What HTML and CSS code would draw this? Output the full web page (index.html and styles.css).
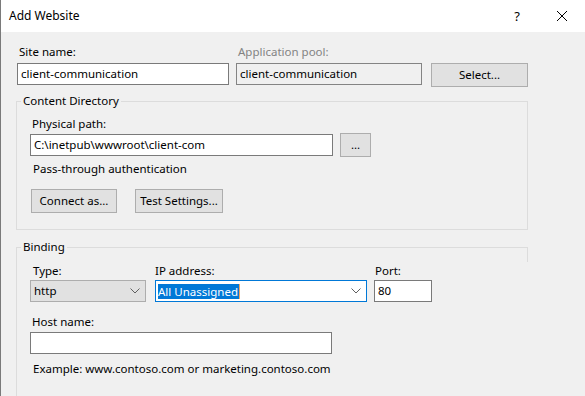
FILE: index.html
```html
<!DOCTYPE html>
<html lang="en">
<head>
    <meta charset="UTF-8">
    <meta name="viewport" content="width=device-width, initial-scale=1.0">
    <title>Add Website</title>
    <link rel="stylesheet" href="styles.css">
</head>
<body>
    <div class="window">
        <div class="titlebar">
            <span class="title">Add Website</span>
            <span class="help">?</span>
            <svg class="close" width="12" height="12" viewBox="0 0 12 12">
                <path d="M1 1 L11 11 M11 1 L1 11" stroke="#000" stroke-width="1" fill="none"/>
            </svg>
        </div>

        <div class="content">
            <div class="site-row">
                <div class="field site-name">
                    <label>Site name:</label>
                    <div class="textbox">client-communication</div>
                </div>
                <div class="field app-pool">
                    <label class="disabled">Application pool:</label>
                    <div class="textbox readonly">client-communication</div>
                </div>
                <button class="btn select-btn">Select...</button>
            </div>

            <fieldset class="group content-dir">
                <legend>Content Directory</legend>
                <label class="inner-label">Physical path:</label>
                <div class="path-row">
                    <div class="textbox path">C:\inetpub\wwwroot\client-com</div>
                    <button class="btn browse-btn">...</button>
                </div>
                <div class="auth">Pass-through authentication</div>
                <div class="btn-row">
                    <button class="btn connect-btn">Connect as...</button>
                    <button class="btn test-btn">Test Settings...</button>
                </div>
            </fieldset>

            <fieldset class="group binding">
                <legend>Binding</legend>
                <div class="binding-row">
                    <div class="field type">
                        <label class="inner-label">Type:</label>
                        <div class="combo">
                            <span>http</span>
                            <svg class="chevron" width="10" height="6" viewBox="0 0 10 6">
                                <path d="M0.5 0.5 L5 5 L9.5 0.5" stroke="#606060" stroke-width="1" fill="none"/>
                            </svg>
                        </div>
                    </div>
                    <div class="field ip">
                        <label>IP address:</label>
                        <div class="combo editable">
                            <span class="selected">All Unassigned</span>
                            <svg class="chevron" width="10" height="6" viewBox="0 0 10 6">
                                <path d="M0.5 0.5 L5 5 L9.5 0.5" stroke="#606060" stroke-width="1" fill="none"/>
                            </svg>
                        </div>
                    </div>
                    <div class="field port">
                        <label>Port:</label>
                        <div class="textbox">80</div>
                    </div>
                </div>
                <label class="inner-label host-label">Host name:</label>
                <div class="textbox host"></div>
                <div class="example">Example: www.contoso.com or marketing.contoso.com</div>
            </fieldset>
        </div>
    </div>
</body>
</html>
```

FILE: styles.css
```css
body {
    margin: 0;
    font-family: "Noto Sans", "Open Sans", sans-serif;
    font-size: 11.5px;
    line-height: 16px;
    color: #000;
    background: #f0f0f0;
    overflow: hidden;
}
.window {
    height: 396px;
    overflow: hidden;
    border-left: 1px solid #7a7a7a;
    background: #f0f0f0;
}
.titlebar {
    height: 32px;
    background: #fff;
    display: flex;
    align-items: center;
    padding-left: 8px;
}
.title {
    flex: 1;
    font-size: 12px;
}
.help {
    margin-right: 36px;
    font-size: 13px;
}
.close {
    margin-right: 17px;
}
.content {
    padding: 12px 0 0 16px;
}
label {
    display: block;
    padding-left: 2px;
}
.disabled {
    color: #838383;
}
.site-row {
    display: flex;
}
.field label {
    margin-bottom: 3px;
}
.textbox {
    box-sizing: border-box;
    height: 22px;
    border: 1px solid #7a7a7a;
    background: #fff;
    padding: 2px 3px;
    white-space: nowrap;
    overflow: hidden;
}
.readonly {
    background: #f0f0f0;
    border-color: #848484;
}
.site-name {
    width: 212px;
}
.app-pool {
    width: 186px;
    margin-left: 7px;
}
.btn {
    box-sizing: border-box;
    height: 24px;
    border: 1px solid #adadad;
    background: #e1e1e1;
    font: inherit;
    color: #000;
    padding: 0;
}
.select-btn {
    width: 97px;
    margin: 19px 0 0 9px;
}
.group {
    position: relative;
    width: 512px;
    box-sizing: border-box;
    margin: 6px 0 0 -1px;
    border: 1px solid #dcdcdc;
    padding: 7px 0 16px 13px;
}
.group legend {
    padding: 0 2px;
    margin-left: -9px;
}
.inner-label {
    margin-bottom: 1px;
}
.path-row {
    display: flex;
    align-items: center;
}
.path {
    width: 303px;
}
.browse-btn {
    width: 31px;
    margin-left: 7px;
}
.auth {
    margin-top: 4px;
    padding-left: 3px;
}
.btn-row {
    display: flex;
    margin-top: 12px;
}
.connect-btn {
    width: 86px;
    margin-left: 1px;
}
.test-btn {
    width: 88px;
    margin-left: 18px;
}
.binding {
    margin-top: 9px;
    padding: 8px 0 80px 13px;
    border-right-color: transparent;
}
.binding::after {
    content: "";
    position: absolute;
    top: -8px;
    right: -1px;
    width: 1px;
    height: 15px;
    background: #dcdcdc;
}
.binding-row {
    display: flex;
}
.binding-row .field label {
    margin-bottom: 1px;
}
.type {
    width: 116px;
}
.type label {
    padding-left: 3px;
}
.ip {
    width: 212px;
    margin-left: 9px;
}
.ip label {
    padding-left: 0;
}
.port {
    width: 58px;
    margin-left: 7px;
}
.port label {
    padding-left: 1px;
}
.combo {
    box-sizing: border-box;
    height: 22px;
    border: 1px solid #adadad;
    background: #e1e1e1;
    display: flex;
    align-items: center;
    padding: 0 5px 0 3px;
}
.combo span {
    flex: 1;
}
.editable {
    border-color: #0078d7;
    background: #fff;
    padding-left: 2px;
}
.editable .selected {
    flex: none;
    background: #0078d7;
    color: #fff;
    line-height: 15px;
    padding-right: 1px;
    border-right: 1px solid #f7a35c;
    margin-right: auto;
}
.host-label {
    margin-top: 12px;
}
.host {
    width: 302px;
    margin-top: 2px;
}
.example {
    margin-top: 7px;
    padding-left: 3px;
}
```
